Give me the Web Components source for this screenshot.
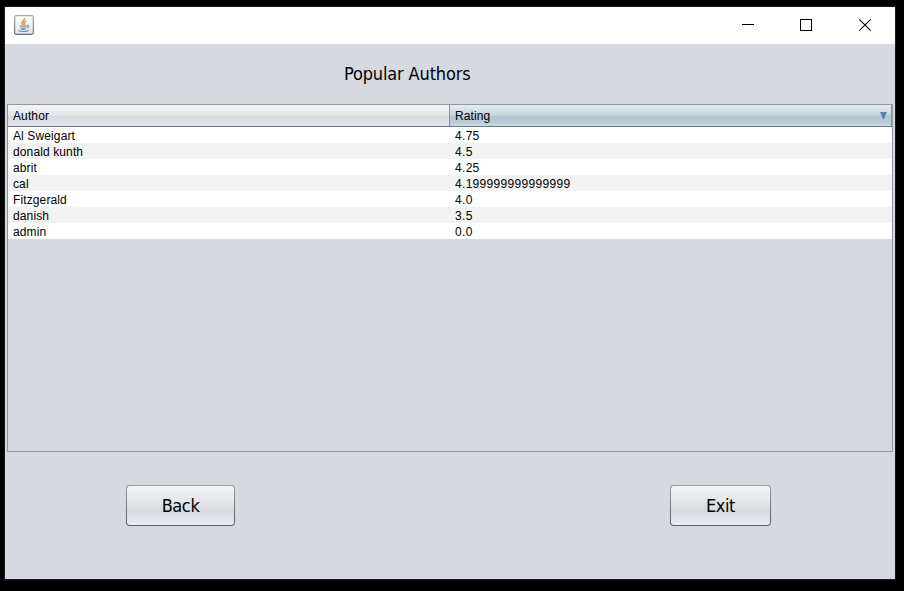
<!DOCTYPE html>
<html lang="en"><head><meta charset="utf-8"><title>Popular Authors</title>
<style>
html,body{margin:0;height:100%;background:#000;overflow:hidden}
body{box-sizing:border-box;padding:7px 9px 12px 5px;font-family:"Liberation Sans",Arial,sans-serif;color:#000}
</style></head><body>
<app-window>
  <title-bar slot="bar"></title-bar>
  <page-heading>Popular Authors</page-heading>
  <author-table></author-table>
  <button-row><nimbus-button style="--w:109px">Back</nimbus-button><nimbus-button style="--w:101px">Exit</nimbus-button></button-row>
</app-window>
<script>
const define=(name,html,init)=>customElements.define(name,class extends HTMLElement{
  constructor(){super();const r=this.attachShadow({mode:'open'});const t=document.createElement('template');t.innerHTML=html;r.append(t.content.cloneNode(true));if(init)init(r)}
});
define('app-window',`<style>
:host{display:flex;flex-direction:column;width:890px;height:572px;background:#d6d9e0;box-shadow:0 0 0 1px #181a1c}
main{display:flex;flex-direction:column;flex:1;padding:0 2px}
</style><slot name="bar"></slot><main><slot></slot></main>`);
define('title-bar',`<style>
:host{display:flex;height:37px;background:#fff;align-items:flex-start;justify-content:space-between}
.logo{margin:8px 0 0 9px}.controls{display:flex}svg{display:block}
</style>
<svg class="logo" width="20" height="20" viewBox="0 0 20 20"><defs><linearGradient id="g" x2="0" y2="1"><stop stop-color="#fff"/><stop offset="1" stop-color="#dfe2e4"/></linearGradient><linearGradient id="b" x2="0" y2="1"><stop stop-color="#a3abb2"/><stop offset="1" stop-color="#5f7888"/></linearGradient></defs>
<rect x=".6" y=".6" width="18.8" height="18.8" rx="1.8" fill="url(#g)" stroke="url(#b)" stroke-width="1.2"/>
<path d="M10.7 3.2c.5 2-3.3 2.8-2.6 5 .2.9 1 1.4 1.3 2.1M12.3 6c-2.4 1-2.8 2-1.8 3 .4.5 0 1-.4 1.4" fill="none" stroke="#ee9850" stroke-width="1.7"/>
<path d="M5.7 10.8q3.5.9 7.5 0M6.3 12.7q3 .9 6.1 0M7 14.2q2.4.7 4.6 0M13 10.7c2.4-.6 2.1 1.6.2 2.2M4.5 15.5c1.5 1.4 9 1.3 10.3-.2" fill="none" stroke="#6d92ab" stroke-width="1.1"/></svg>
<svg class="controls" width="174" height="37" viewBox="0 0 174 37" fill="none" stroke="#000"><path d="M21 17.5h12" shape-rendering="crispEdges"/><rect x="79.5" y="12.5" width="11" height="11" shape-rendering="crispEdges"/><path d="M138.3 12.3l11.4 11.4M149.7 12.3l-11.4 11.4" stroke-width="1.1"/></svg>`);
define('page-heading',`<style>:host{display:block;height:60px;box-sizing:border-box;padding:18px 0 0 337px;font:18px/24px "DejaVu Sans Condensed","DejaVu Sans",sans-serif;font-stretch:condensed;letter-spacing:-.15px;white-space:nowrap}</style><slot></slot>`);
define('author-table',`<style>
:host{display:block;box-sizing:border-box;width:886px;height:348px;border:1px solid #9297a1;font-size:12px;line-height:16px}
.row,.head{display:grid;grid-template-columns:442px 1fr}
.row{height:16px;background:#fff}.row:nth-child(even){background:#f2f2f2}
.row span{padding:1px 5px 0;height:15px;letter-spacing:.12px}
.row span:last-child{letter-spacing:.31px}
.head{height:22px;box-sizing:border-box;border-bottom:1px solid #6f7680;line-height:21px}
.head span{padding:1px 5px 0;height:21px;letter-spacing:.12px;box-sizing:border-box;background:linear-gradient(#f4f5f7,#e4e6e9 48%,#d7dae0 52%,#e2e5ec)}
.head span:first-child{border-right:1px solid #8b929c}
.head .sorted{display:flex;justify-content:space-between;padding-right:4px;border-right:1px solid #8b9aa8;background:linear-gradient(#e6edf2,#c6d4df 48%,#b2c6d3 55%,#b5c9d7 80%,#c8dbe8)}
svg{margin-top:6px}
</style><div class="head"><span>Author</span><span class="sorted">Rating<svg width="7" height="8"><path d="M0 0h7L4 7H3z" fill="#557fac"/></svg></span></div><div class="rows"></div>`,r=>{
 const rows=[['Al Sweigart','4.75'],['donald kunth','4.5'],['abrit','4.25'],['cal','4.199999999999999'],['Fitzgerald','4.0'],['danish','3.5'],['admin','0.0']];
 for(const data of rows){const d=document.createElement('div');d.className='row';for(const v of data){const s=document.createElement('span');s.textContent=v;d.append(s)}r.querySelector('.rows').append(d)}
});
define('button-row',`<style>:host{display:flex;justify-content:space-between;padding:33px 122px 0 119px}</style><slot></slot>`);
define('nimbus-button',`<style>:host{display:block;width:var(--w);height:41px}
button{width:100%;height:100%;padding:1px 0 0;border:1px solid transparent;border-radius:4px;color:#000;font:18px/24px "DejaVu Sans Condensed","DejaVu Sans",sans-serif;font-stretch:condensed;letter-spacing:-.4px;background:linear-gradient(#f3f4f6,#e2e3e7 45%,#d6d9df 65%,#e8ecf5) padding-box,linear-gradient(#969ba4,#565b65) border-box}
</style><button><slot></slot></button>`);
</script></body></html>
